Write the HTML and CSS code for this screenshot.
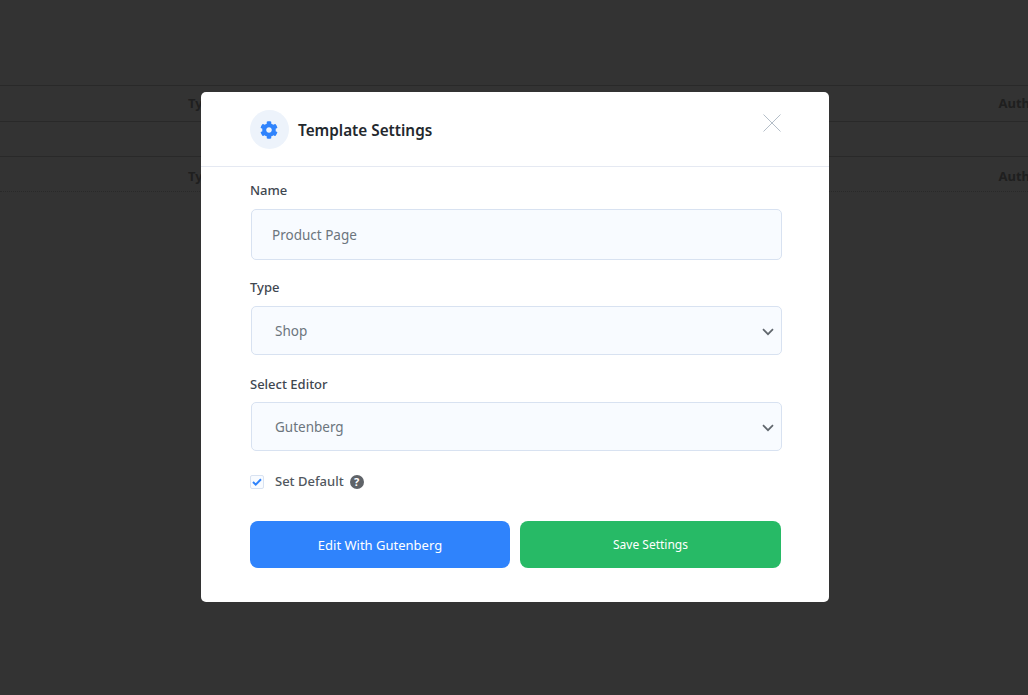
FILE: index.html
```html
<!DOCTYPE html>
<html lang="en">
<head>
  <meta charset="UTF-8" />
  <meta name="viewport" content="width=device-width, initial-scale=1.0"/>
  <title>Template Settings</title>
  <link rel="stylesheet" href="styles.css">
</head>
<body>

<div class="table">
  <div class="row"><span class="cell-type">Type</span><span class="cell-author">Author</span></div>
  <div class="row"></div>
  <div class="row"><span class="cell-type">Type</span><span class="cell-author">Author</span></div>
</div>

<div class="overlay"></div>

<div class="modal-wrap">
  <div class="modal">
    <header class="modal-head">
      <div class="head-icon">
        <svg class="gear" width="18" height="18" viewBox="0 0 512 512"><path fill="#2f83fc" d="M487.4 315.7l-42.6-24.6c4.3-23.2 4.3-47 0-70.2l42.6-24.6c4.9-2.8 7.1-8.6 5.5-14-11.1-35.6-30-67.8-54.7-94.6-3.8-4.1-10-5.1-14.8-2.3L380.8 110c-17.9-15.4-38.5-27.3-60.8-35.1V25.8c0-5.6-3.9-10.5-9.4-11.7-36.7-8.2-74.3-7.8-109.2 0-5.5 1.2-9.4 6.1-9.4 11.7V75c-22.2 7.9-42.8 19.8-60.8 35.1L88.7 85.5c-4.9-2.8-11-1.9-14.8 2.3-24.7 26.7-43.6 58.9-54.7 94.6-1.7 5.4.6 11.2 5.5 14L67.3 221c-4.3 23.2-4.3 47 0 70.2l-42.6 24.6c-4.9 2.8-7.1 8.6-5.5 14 11.1 35.6 30 67.8 54.7 94.6 3.8 4.1 10 5.1 14.8 2.3l42.6-24.6c17.9 15.4 38.5 27.3 60.8 35.1v49.2c0 5.6 3.9 10.5 9.4 11.7 36.7 8.2 74.3 7.8 109.2 0 5.5-1.2 9.4-6.1 9.4-11.7v-49.2c22.2-7.9 42.8-19.8 60.8-35.1l42.6 24.6c4.9 2.8 11 1.9 14.8-2.3 24.7-26.7 43.6-58.9 54.7-94.6 1.5-5.5-.7-11.3-5.6-14.1zM256 336c-44.1 0-80-35.9-80-80s35.9-80 80-80 80 35.9 80 80-35.9 80-80 80z"/></svg>
      </div>
      <h2 class="modal-title">Template Settings</h2>
      <svg class="close" width="18" height="18" viewBox="0 0 18 18"><path d="M.5.5l17 17M17.5.5l-17 17" stroke="#b4bec8" stroke-width="1" fill="none"/></svg>
    </header>

    <div class="modal-body">
      <label class="label">Name</label>
      <div class="field field-name">Product Page</div>

      <label class="label label-type">Type</label>
      <div class="field field-select">Shop
        <svg class="chevron" width="12" height="8" viewBox="0 0 12 8"><path d="M1 1.2l5 5 5-5" stroke="#60666d" stroke-width="1.7" fill="none"/></svg>
      </div>

      <label class="label label-editor">Select Editor</label>
      <div class="field field-select field-editor">Gutenberg
        <svg class="chevron" width="12" height="8" viewBox="0 0 12 8"><path d="M1 1.2l5 5 5-5" stroke="#60666d" stroke-width="1.7" fill="none"/></svg>
      </div>

      <div class="default-row">
        <span class="check">
          <svg width="10" height="8" viewBox="0 0 10 8"><path d="M1 4l2.7 2.6L9 1.2" stroke="#2f83fc" stroke-width="2" fill="none"/></svg>
        </span>
        <span class="default-text">Set Default</span>
        <span class="help">?</span>
      </div>

      <div class="actions">
        <a class="btn btn-blue">Edit With Gutenberg</a>
        <a class="btn btn-green">Save Settings</a>
      </div>
    </div>
  </div>
</div>

</body>
</html>
```

FILE: styles.css
```css
* {
  margin: 0;
  padding: 0;
  box-sizing: border-box;
  font-family: 'Noto Sans', sans-serif;
}

html, body {
  height: 100%;
  background: #fff;
  overflow: hidden;
}

.table {
  padding-top: 85px;
}

.row {
  display: flex;
  justify-content: space-between;
  height: 36px;
  padding: 8px 0 0 188px;
  border-top: 1px solid #ccc;
  font-size: 13px;
  font-weight: 700;
  color: #999;
}

.row:nth-child(2) {
  height: 35px;
}

.row:last-child {
  border-bottom: 1px dotted #ccc;
  padding-top: 10px;
}

.cell-author {
  margin-right: -16px;
}

.overlay {
  position: fixed;
  inset: 0;
  background: rgba(0, 0, 0, 0.8);
}

.modal-wrap {
  position: fixed;
  inset: 0;
  display: flex;
  justify-content: center;
  align-items: center;
  padding: 0 0 1px 2px;
}

.modal {
  width: 628px;
  height: 510px;
  background: #fff;
  border-radius: 5px;
}

.modal-head {
  display: flex;
  align-items: center;
  height: 75px;
  padding: 0 48px 0 49px;
  border-bottom: 1px solid #e5e9f2;
}

.head-icon {
  display: flex;
  justify-content: center;
  align-items: center;
  width: 39px;
  height: 39px;
  padding-right: 2px;
  border-radius: 50%;
  background: #edf3fb;
  margin-top: 1px;
}

.modal-title {
  margin: 2px 0 0 9px;
  font-size: 15.3px;
  font-weight: 600;
  color: #23282d;
}

.close {
  margin-left: auto;
  margin-top: -12px;
}

.modal-body {
  padding: 14px 47px 0 49px;
}

.label {
  display: block;
  font-size: 13px;
  line-height: 18px;
  font-weight: 500;
  color: #3f4750;
}

.label-type {
  margin-top: 18px;
}

.label-editor {
  margin-top: 20px;
}

.field {
  position: relative;
  display: flex;
  align-items: center;
  height: 49px;
  margin: 10px 0 0 1px;
  padding-left: 23px;
  background: #f8fbff;
  border: 1px solid #d8e2f1;
  border-radius: 5px;
  font-size: 13.5px;
  color: #6c757d;
}

.field-name {
  height: 51px;
  padding-left: 20px;
}

.field-editor {
  margin-top: 9px;
}

.chevron {
  position: absolute;
  right: 7px;
  top: 21px;
}

.default-row {
  display: flex;
  align-items: center;
  margin-top: 21px;
  height: 19px;
}

.check {
  display: flex;
  justify-content: center;
  align-items: center;
  width: 14px;
  height: 14px;
  background: #f8fbff;
  border: 1px solid #d8e2f1;
  border-radius: 2px;
}

.default-text {
  margin-left: 11px;
  padding-bottom: 2px;
  font-size: 13px;
  font-weight: 500;
  color: #50575e;
}

.help {
  display: flex;
  justify-content: center;
  align-items: center;
  width: 14px;
  height: 14px;
  margin-left: 6px;
  border-radius: 50%;
  background: #5f6368;
  color: #fff;
  font-size: 11px;
  font-weight: 700;
}

.actions {
  display: flex;
  gap: 10px;
  margin-top: 30px;
}

.btn {
  display: flex;
  justify-content: center;
  align-items: center;
  height: 47px;
  border-radius: 8px;
  color: #fff;
  font-size: 12px;
}

.btn-blue {
  width: 260px;
  background: #2f83fc;
  font-size: 13px;
}

.btn-green {
  width: 261px;
  background: #27ba66;
}
```
